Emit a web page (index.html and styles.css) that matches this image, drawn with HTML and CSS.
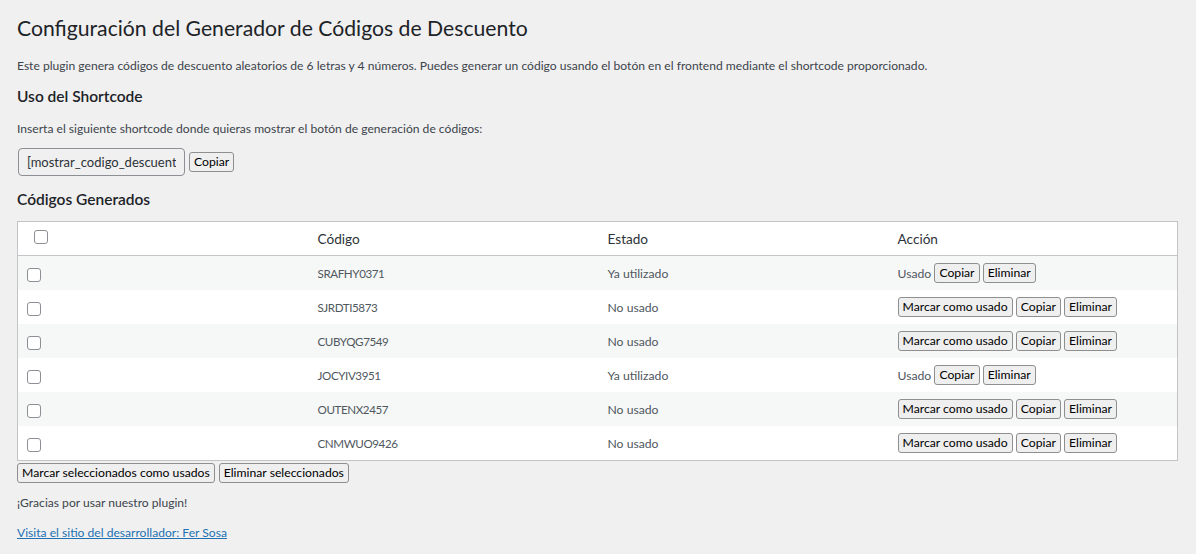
FILE: index.html
```html
<!DOCTYPE html>
<html lang="es">
<head>
<meta charset="utf-8">
<title>Configuración del Generador de Códigos de Descuento</title>
<link rel="stylesheet" href="styles.css">
</head>
<body>
<div class="wrap">
  <h1 class="title">Configuración del Generador de Códigos de Descuento</h1>
  <p class="desc">Este plugin genera códigos de descuento aleatorios de 6 letras y 4 números. Puedes generar un código usando el botón en el frontend mediante el shortcode proporcionado.</p>
  <h2 class="sub">Uso del Shortcode</h2>
  <p class="desc">Inserta el siguiente shortcode donde quieras mostrar el botón de generación de códigos:</p>
  <div class="shortcode-row">
    <input class="shortcode" type="text" value="[mostrar_codigo_descuento]" readonly>
    <button class="btn">Copiar</button>
  </div>
  <h2 class="sub sub-codes">Códigos Generados</h2>
  <table class="codes">
    <thead>
      <tr>
        <th class="check-head"><input type="checkbox" class="cb"></th>
        <th>Código</th>
        <th>Estado</th>
        <th>Acción</th>
      </tr>
    </thead>
    <tbody>
      <tr>
        <td class="check"><input type="checkbox" class="cb"></td>
        <td class="code">SRAFHY0371</td>
        <td>Ya utilizado</td>
        <td class="actions"><span class="used">Usado</span> <button class="btn">Copiar</button> <button class="btn">Eliminar</button></td>
      </tr>
      <tr>
        <td class="check"><input type="checkbox" class="cb"></td>
        <td class="code">SJRDTI5873</td>
        <td>No usado</td>
        <td class="actions"><button class="btn">Marcar como usado</button> <button class="btn">Copiar</button> <button class="btn">Eliminar</button></td>
      </tr>
      <tr>
        <td class="check"><input type="checkbox" class="cb"></td>
        <td class="code">CUBYQG7549</td>
        <td>No usado</td>
        <td class="actions"><button class="btn">Marcar como usado</button> <button class="btn">Copiar</button> <button class="btn">Eliminar</button></td>
      </tr>
      <tr>
        <td class="check"><input type="checkbox" class="cb"></td>
        <td class="code">JOCYIV3951</td>
        <td>Ya utilizado</td>
        <td class="actions"><span class="used">Usado</span> <button class="btn">Copiar</button> <button class="btn">Eliminar</button></td>
      </tr>
      <tr>
        <td class="check"><input type="checkbox" class="cb"></td>
        <td class="code">OUTENX2457</td>
        <td>No usado</td>
        <td class="actions"><button class="btn">Marcar como usado</button> <button class="btn">Copiar</button> <button class="btn">Eliminar</button></td>
      </tr>
      <tr>
        <td class="check"><input type="checkbox" class="cb"></td>
        <td class="code">CNMWUO9426</td>
        <td>No usado</td>
        <td class="actions"><button class="btn">Marcar como usado</button> <button class="btn">Copiar</button> <button class="btn">Eliminar</button></td>
      </tr>
    </tbody>
  </table>
  <div class="bulk">
    <button class="btn">Marcar seleccionados como usados</button>
    <button class="btn">Eliminar seleccionados</button>
  </div>
  <p class="desc thanks">¡Gracias por usar nuestro plugin!</p>
  <p class="desc"><a class="dev-link" href="#">Visita el sitio del desarrollador: Fer Sosa</a></p>
</div>
</body>
</html>
```

FILE: styles.css
```css
html, body {
  margin: 0;
  padding: 0;
  background: #f0f0f1;
}
body {
  font-family: Lato, "Liberation Sans", sans-serif;
  font-size: 12.1px;
  color: #3c434a;
}
.wrap {
  padding: 13px 18px 0 17px;
}
.title {
  margin: 0;
  font-size: 21.2px;
  font-weight: 400;
  line-height: 30px;
  color: #1d2327;
}
.desc {
  margin: 13px 0 0;
  line-height: 19px;
  font-size: 12.1px;
}
.sub {
  margin: 10px 0 0;
  font-size: 15.5px;
  font-weight: 600;
  line-height: 22px;
  color: #1d2327;
}
.sub + .desc {
  margin-top: 12px;
}
.shortcode-row {
  margin-top: 10px;
  display: flex;
  align-items: center;
  gap: 4px;
}
.shortcode {
  box-sizing: border-box;
  width: 167px;
  height: 28px;
  margin-left: 1px;
  padding: 0 8px;
  border: 1px solid #8c8f94;
  border-radius: 4px;
  background: #f0f0f0;
  font-family: inherit;
  font-size: 13px;
  color: #2c3338;
}
.sub-codes {
  margin-top: 12px;
}
.btn {
  box-sizing: border-box;
  height: 20px;
  padding: 0 4px;
  border: 1px solid #8f8f8f;
  border-radius: 3px;
  background: #efefef;
  font-family: inherit;
  font-size: 12.2px;
  line-height: 18px;
  color: #000;
  vertical-align: middle;
}
.codes {
  margin-top: 11px;
  width: 100%;
  table-layout: fixed;
  border-collapse: collapse;
  border: 1px solid #c3c4c7;
  background: #fff;
}
.codes th {
  height: 33px;
  padding: 0 10px;
  text-align: left;
  font-weight: 400;
  font-size: 13.6px;
  color: #2c3338;
  border-bottom: 1px solid #c3c4c7;
}
.codes td {
  height: 34px;
  padding: 0 10px;
  font-size: 12.2px;
  color: #50575e;
}
.codes td.code {
  font-size: 11.6px;
  letter-spacing: -0.4px;
}
.codes tbody tr:nth-child(odd) {
  background: #f6f7f7;
}
.codes th.check-head {
  padding-left: 16px;
}
.codes td.check {
  padding-left: 9px;
}
.cb {
  appearance: none;
  -webkit-appearance: none;
  box-sizing: border-box;
  width: 14px;
  height: 14px;
  margin: 0;
  border: 1px solid #8c8f94;
  border-radius: 3px;
  background: #fff;
  vertical-align: middle;
}
.check-head .cb {
  position: relative;
  top: -3px;
}
.check .cb {
  position: relative;
  top: 1px;
}
.actions {
  white-space: nowrap;
}
.used {
  vertical-align: middle;
}
.bulk {
  margin-top: 2px;
  display: flex;
  gap: 4px;
}
.thanks {
  margin-top: 10px;
}
.thanks + .desc {
  margin-top: 11px;
}
.dev-link {
  color: #2271b1;
  text-decoration: underline;
}
```
